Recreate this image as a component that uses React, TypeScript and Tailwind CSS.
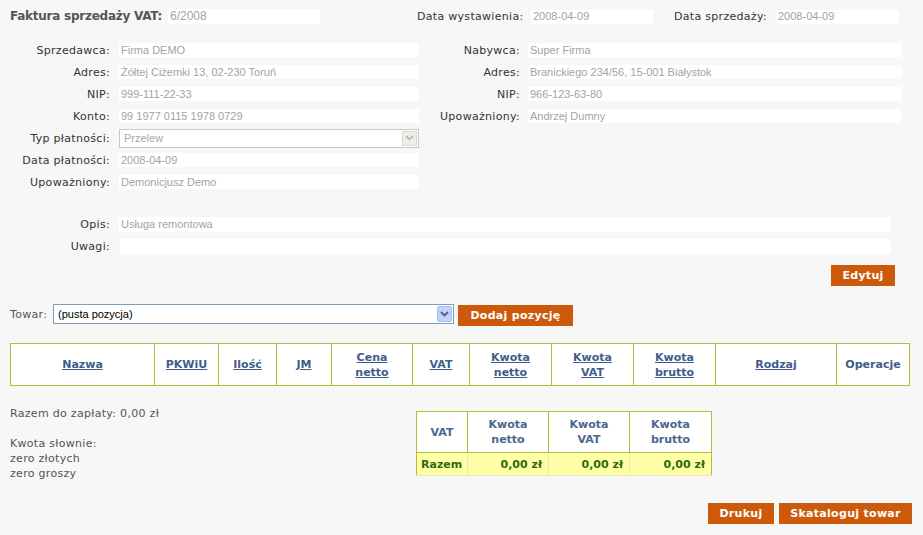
import React from 'react';

const Field = ({ value = '', className = '' }: { value?: string; className?: string }) => (
  <div
    className={`h-[14px] bg-white flex items-center pl-[2px] text-[11px] tracking-normal text-[#a3a3a3] font-['Liberation_Sans',Arial,sans-serif] whitespace-nowrap overflow-hidden ${className}`}
  >
    {value}
  </div>
);

const Btn = ({ children, className = '' }: { children: React.ReactNode; className?: string }) => (
  <button className={`h-[21px] bg-[#cc5a0a] text-white font-bold text-[11px] tracking-[0.3px] flex items-center justify-center ${className}`}>
    {children}
  </button>
);

const Chevron = ({ color }: { color: string }) => (
  <svg width="9" height="6" viewBox="0 0 9 6">
    <path d="M1 1 L4.5 4.5 L8 1" fill="none" stroke={color} strokeWidth="1.8" />
  </svg>
);

const leftRows: [string, string][] = [
  ['Sprzedawca:', 'Firma DEMO'],
  ['Adres:', 'Żółtej Ciżemki 13, 02-230 Toruń'],
  ['NIP:', '999-111-22-33'],
  ['Konto:', '99 1977 0115 1978 0729'],
  ['Typ płatności:', ''],
  ['Data płatności:', '2008-04-09'],
  ['Upoważniony:', 'Demonicjusz Demo'],
];

const rightRows: [string, string][] = [
  ['Nabywca:', 'Super Firma'],
  ['Adres:', 'Branickiego 234/56, 15-001 Białystok'],
  ['NIP:', '966-123-63-80'],
  ['Upoważniony:', 'Andrzej Dumny'],
];

const cols = [
  { w: 144, label: ['Nazwa'] },
  { w: 64, label: ['PKWiU'] },
  { w: 58, label: ['Ilość'] },
  { w: 55, label: ['JM'] },
  { w: 81, label: ['Cena', 'netto'] },
  { w: 57, label: ['VAT'] },
  { w: 82, label: ['Kwota', 'netto'] },
  { w: 82, label: ['Kwota', 'VAT'] },
  { w: 82, label: ['Kwota', 'brutto'] },
  { w: 121, label: ['Rodzaj'] },
];

export default function App() {
  return (
    <div className="w-[923px] min-h-[535px] bg-[#f7f7f7] text-[11px] tracking-[0.3px] text-[#333] font-['DejaVu_Sans',Verdana,sans-serif] leading-[15px]">
      {/* header */}
      <div className="flex items-center pt-[9px] h-[24px]">
        <span className="ml-[10px] w-[158px] font-bold text-[12px] tracking-[-0.25px] text-[#555] whitespace-nowrap">Faktura sprzedaży VAT:</span>
        <Field value="6/2008" className="w-[152px] h-[15px] text-[12px]" />
        <span className="ml-[97px] w-[114px] whitespace-nowrap">Data wystawienia:</span>
        <Field value="2008-04-09" className="w-[122px]" />
        <span className="ml-[21px] w-[102px] whitespace-nowrap">Data sprzedaży:</span>
        <Field value="2008-04-09" className="w-[123px]" />
      </div>

      {/* parties */}
      <div className="flex mt-[15px]">
        <div className="w-[419px] flex flex-col">
          {leftRows.map(([l, v]) => (
            <div key={l} className="h-[22px] flex items-center">
              <span className="w-[110px] text-right whitespace-nowrap">{l}</span>
              {l === 'Typ płatności:' ? (
                <div className="ml-[9px] w-[300px] h-[19px] border border-[#c8c8c0] bg-white flex items-center justify-between">
                  <span className="pl-[4px] text-[11px] tracking-normal text-[#a8a8a8] font-['Liberation_Sans',Arial,sans-serif]">Przelew</span>
                  <span className="w-[15px] h-[15px] mr-[1px] bg-[#eeeeea] border border-[#d8d8d0] flex items-center justify-center">
                    <Chevron color="#bbbbb4" />
                  </span>
                </div>
              ) : (
                <Field value={v} className="ml-[9px] w-[300px]" />
              )}
            </div>
          ))}
        </div>
        <div className="flex flex-col">
          {rightRows.map(([l, v]) => (
            <div key={l} className="h-[22px] flex items-center">
              <span className="w-[101px] text-right whitespace-nowrap">{l}</span>
              <Field value={v} className="ml-[8px] w-[374px]" />
            </div>
          ))}
        </div>
      </div>

      {/* description */}
      <div className="flex flex-col mt-[20px]">
        <div className="h-[22px] flex items-center">
          <span className="w-[110px] text-right">Opis:</span>
          <Field value="Usługa remontowa" className="ml-[9px] w-[772px] h-[15px]" />
        </div>
        <div className="h-[22px] flex items-center">
          <span className="w-[110px] text-right">Uwagi:</span>
          <Field className="ml-[10px] w-[771px] h-[15px]" />
        </div>
      </div>

      <div className="flex justify-end pr-[28px] mt-[8px]">
        <Btn className="w-[64px]">Edytuj</Btn>
      </div>

      {/* towar */}
      <div className="flex items-center mt-[17px] h-[22px]">
        <span className="ml-[10px] w-[43px] text-[#555]">Towar:</span>
        <div className="w-[401px] h-[20px] border border-[#7f9db9] bg-white flex items-center justify-between">
          <span className="pl-[4px] text-[11px] tracking-normal text-black font-['Liberation_Sans',Arial,sans-serif]">(pusta pozycja)</span>
          <span className="w-[15px] h-[16px] mr-[1px] rounded-[2px] bg-[#c1d3fb] border border-[#a9bfe9] flex items-center justify-center">
            <Chevron color="#4d6185" />
          </span>
        </div>
        <Btn className="ml-[4px] w-[115px] mt-[2px]">Dodaj pozycję</Btn>
      </div>

      {/* main table */}
      <table className="ml-[10px] mt-[18px] border-collapse bg-white tracking-normal">
        <thead>
          <tr className="h-[42px]">
            {cols.map((c) => (
              <th
                key={c.label.join()}
                style={{ width: c.w }}
                className="border border-[#b9b93a] text-center font-bold text-[#3f5d8c] underline leading-[15px] p-0"
              >
                {c.label.map((t, i) => (
                  <div key={i}>{t}</div>
                ))}
              </th>
            ))}
            <th className="w-[73px] border border-[#b9b93a] text-center font-bold text-[#3f5d8c] p-0">Operacje</th>
          </tr>
        </thead>
      </table>

      {/* summary */}
      <div className="flex items-start mt-[20px]">
        <div className="ml-[10px] w-[406px] text-[#555] text-[11px]">
          <div>Razem do zapłaty: 0,00 zł</div>
          <div className="mt-[15px]">Kwota słownie:</div>
          <div>zero złotych</div>
          <div>zero groszy</div>
        </div>
        <table className="mt-[5px] border-collapse bg-white tracking-normal">
          <thead>
            <tr className="h-[41px]">
              <th className="w-[51px] border border-[#b9b93a] font-bold text-[#4a6690] text-center p-0">VAT</th>
              <th className="w-[81px] border border-[#b9b93a] font-bold text-[#4a6690] text-center p-0">
                <div>Kwota</div>
                <div>netto</div>
              </th>
              <th className="w-[81px] border border-[#b9b93a] font-bold text-[#4a6690] text-center p-0">
                <div>Kwota</div>
                <div>VAT</div>
              </th>
              <th className="w-[82px] border border-[#b9b93a] font-bold text-[#4a6690] text-center p-0">
                <div>Kwota</div>
                <div>brutto</div>
              </th>
            </tr>
          </thead>
          <tbody>
            <tr className="h-[23px] bg-[#ffffa6] text-[#2d6a10] font-bold">
              <td className="border border-[#e8e8c0] border-l-[#b9b93a] pl-[4px]">Razem</td>
              <td className="border border-[#e8e8c0] text-right pr-[6px]">0,00 zł</td>
              <td className="border border-[#e8e8c0] text-right pr-[6px]">0,00 zł</td>
              <td className="border border-[#e8e8c0] border-r-[#b9b93a] text-right pr-[6px]">0,00 zł</td>
            </tr>
          </tbody>
        </table>
      </div>

      <div className="flex justify-end gap-[5px] pr-[11px] mt-[22px] pb-[12px]">
        <Btn className="w-[66px]">Drukuj</Btn>
        <Btn className="w-[133px]">Skataloguj towar</Btn>
      </div>
    </div>
  );
}
